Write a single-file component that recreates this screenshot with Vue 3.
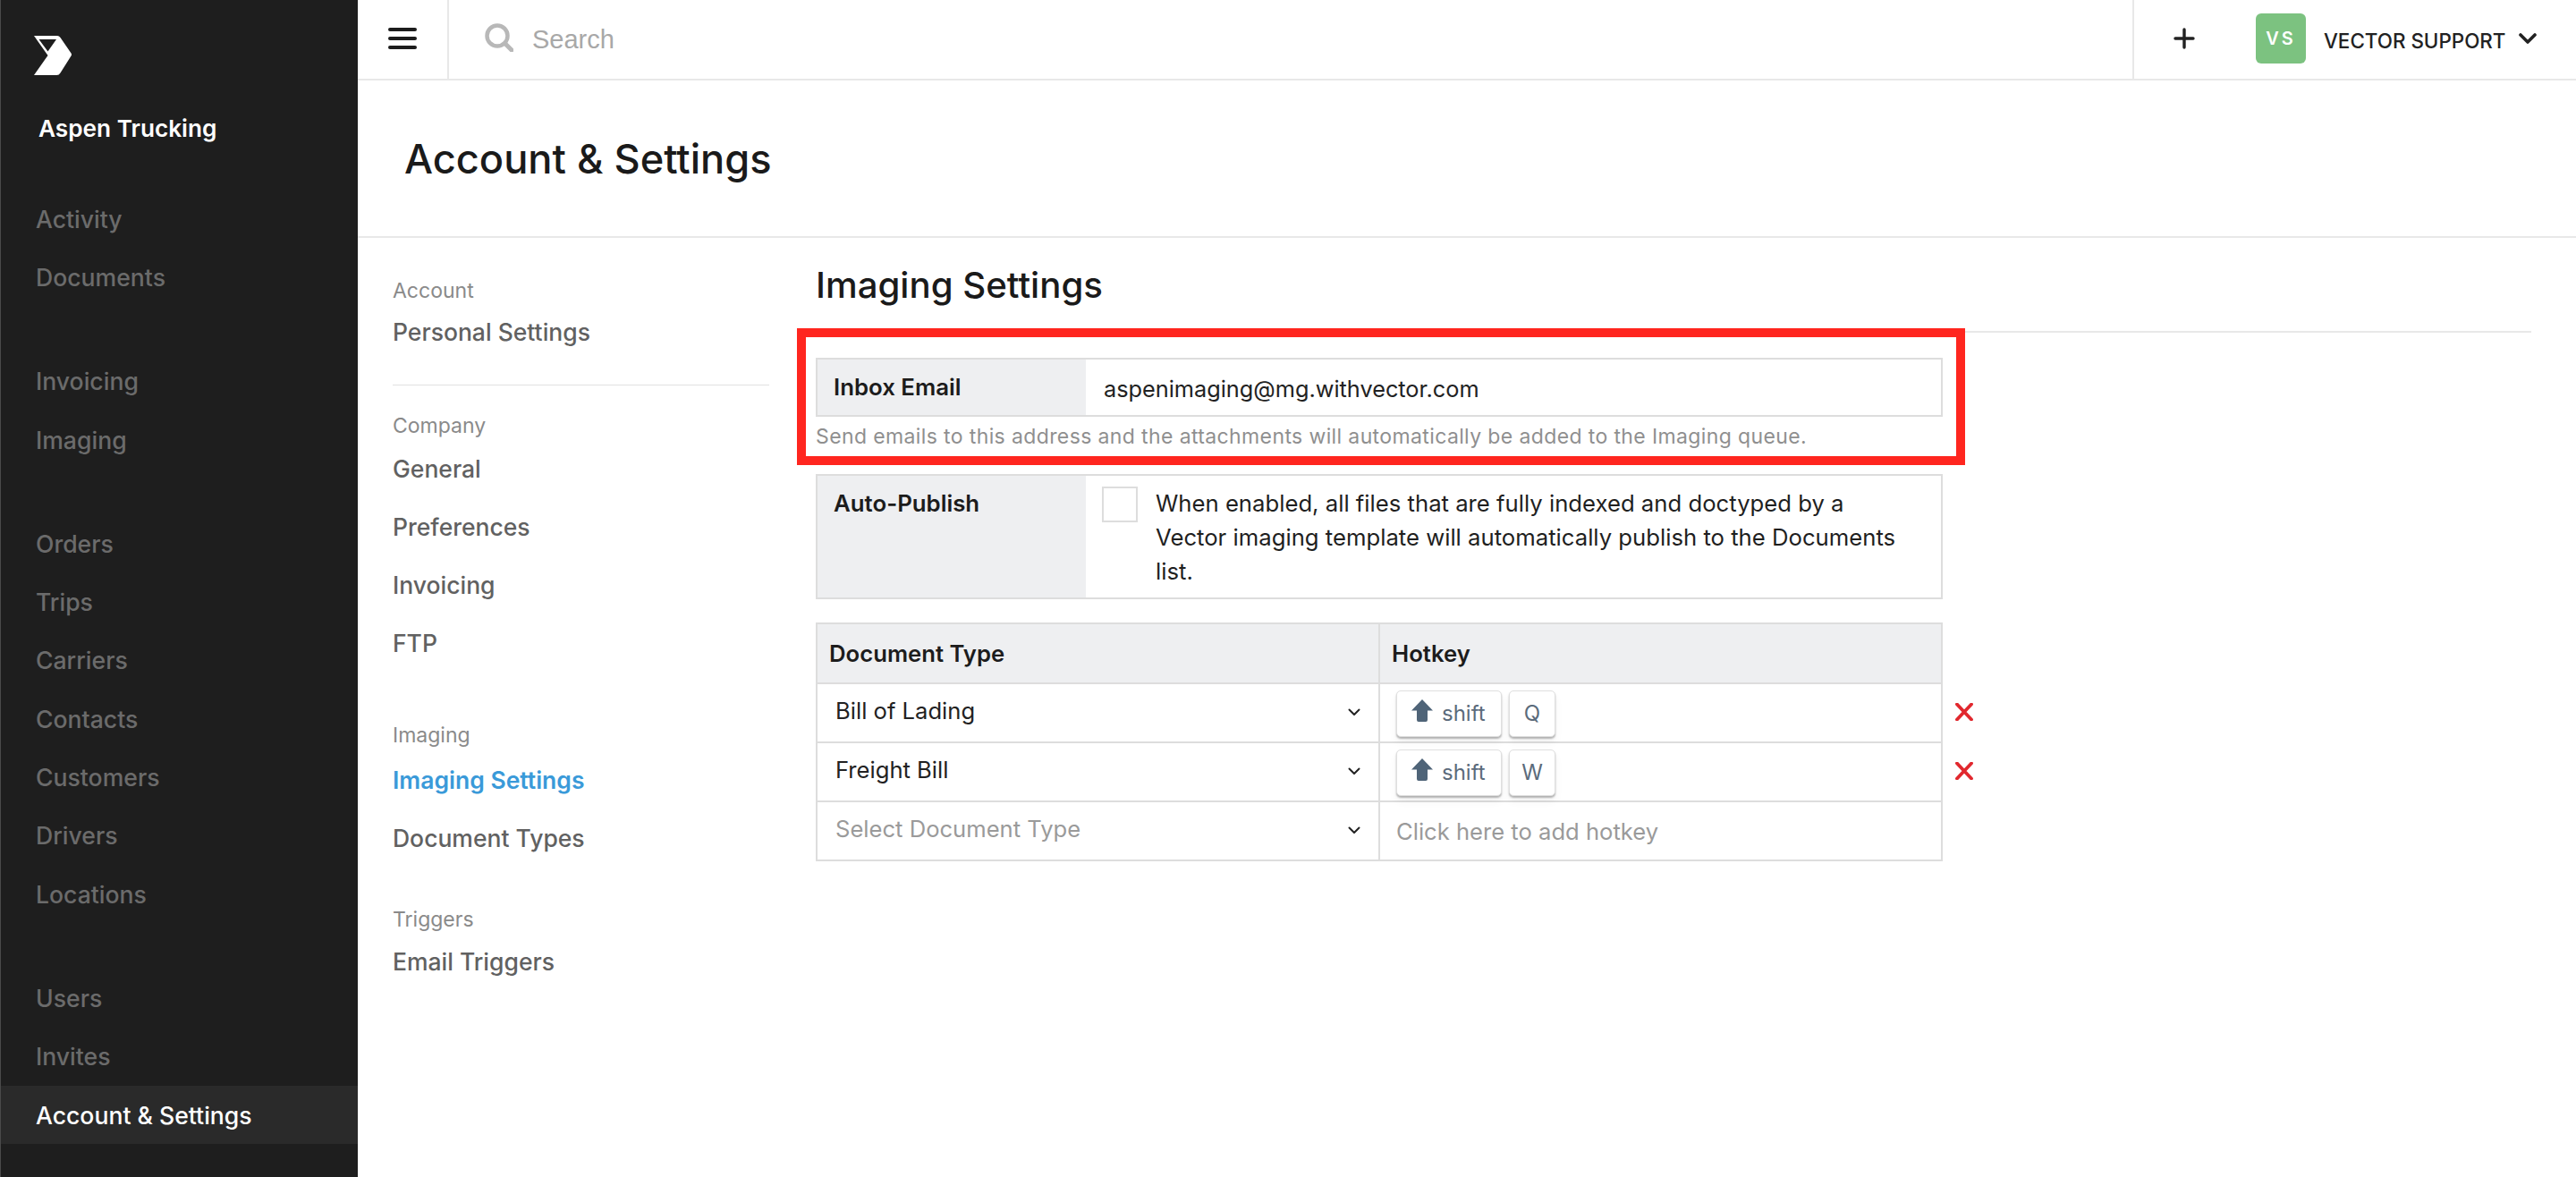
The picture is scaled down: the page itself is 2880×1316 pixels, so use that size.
<script setup>
const mainGroups = [
  ['Activity', 'Documents'],
  ['Invoicing', 'Imaging'],
  ['Orders', 'Trips', 'Carriers', 'Contacts', 'Customers', 'Drivers', 'Locations'],
  ['Users', 'Invites', 'Account & Settings']
]
const subGroups = [
  { label: 'Account', links: ['Personal Settings'], rule: true, cls: 'g-account' },
  { label: 'Company', links: ['General', 'Preferences', 'Invoicing', 'FTP'], cls: 'g-company' },
  { label: 'Imaging', links: ['Imaging Settings', 'Document Types'], cls: 'g-imaging' },
  { label: 'Triggers', links: ['Email Triggers'], cls: 'g-triggers' }
]
const rows = [
  { doc: 'Bill of Lading', key: 'Q' },
  { doc: 'Freight Bill', key: 'W' }
]
</script>

<template>
  <div class="app">
    <aside class="sidebar">
      <svg class="logo" viewBox="0 0 42 44" width="42" height="44">
        <path fill="#fff" fill-rule="evenodd" d="M1 0H26Q28 0 29.500 2L41.500 19.500Q42.500 21 41.500 22.500L29.500 41.500Q28 44 25.500 44H0L15.500 22L0 0ZM5.500 4L15.500 17.500L25 4Z"/>
      </svg>
      <div class="company">Aspen Trucking</div>
      <nav class="main-nav">
        <div v-for="(group, i) in mainGroups" :key="i" class="nav-group">
          <a v-for="item in group" :key="item" class="nav-item" :class="{ active: item === 'Account & Settings' }">{{ item }}</a>
        </div>
      </nav>
    </aside>

    <div class="main">
      <header class="topbar">
        <button class="menu-btn" aria-label="Menu">
          <span></span><span></span><span></span>
        </button>
        <div class="search">
          <svg viewBox="0 0 32 32" width="32" height="32" fill="none" stroke="#b8b8b8">
            <circle cx="14" cy="14" r="11.500" stroke-width="4.500"/>
            <path d="M22.500 22.500L30 30" stroke-width="5" stroke-linecap="round"/>
          </svg>
          <span>Search</span>
        </div>
        <div class="top-right">
          <svg class="plus" viewBox="0 0 24 24" width="24" height="24" stroke="#222" stroke-width="3.400" stroke-linecap="round">
            <path d="M12 2V22M2 12H22"/>
          </svg>
          <div class="avatar">VS</div>
          <span class="user">VECTOR SUPPORT</span>
          <svg class="user-caret" viewBox="0 0 20 12" width="20" height="12" fill="none" stroke="#222" stroke-width="3.600" stroke-linecap="round" stroke-linejoin="round">
            <path d="M2 2L10 10L18 2"/>
          </svg>
        </div>
      </header>

      <div class="page-head"><h1>Account &amp; Settings</h1></div>

      <div class="page-body">
        <nav class="sub-nav">
          <section v-for="g in subGroups" :key="g.label" class="sub-group" :class="g.cls">
            <div class="sub-label">{{ g.label }}</div>
            <a v-for="l in g.links" :key="l" class="sub-link" :class="{ current: l === 'Imaging Settings' }">{{ l }}</a>
          </section>
        </nav>

        <section class="content">
          <h2>Imaging Settings</h2>
          <div class="form">
            <div class="highlight"></div>
            <div class="field field-email">
              <div class="field-label">Inbox Email</div>
              <div class="field-value email">aspenimaging@mg.withvector.com</div>
            </div>
            <p class="help">Send emails to this address and the attachments will automatically be added to the Imaging queue.</p>
            <div class="field field-auto">
              <div class="field-label">Auto-Publish</div>
              <div class="field-value auto">
                <span class="checkbox"></span>
                <span class="auto-text">When enabled, all files that are fully indexed and doctyped by a Vector imaging template will automatically publish to the Documents list.</span>
              </div>
            </div>

            <div class="table">
              <div class="tr head">
                <div class="td th-doc">Document Type</div>
                <div class="td th-key">Hotkey</div>
              </div>
              <div v-for="r in rows" :key="r.key" class="tr">
                <div class="td doc">
                  <span>{{ r.doc }}</span>
                  <svg class="caret" viewBox="0 0 14 9" width="14" height="9" fill="none" stroke="#222" stroke-width="2" stroke-linecap="round" stroke-linejoin="round"><path d="M1.500 1.500L7 7L12.500 1.500"/></svg>
                </div>
                <div class="td keys">
                  <span class="key key-shift">
                    <svg viewBox="0 0 24 25" width="24" height="25"><path fill="#4f6478" d="M12 0L24 12.500H18V23Q18 25 16 25H8Q6 25 6 23V12.500H0Z"/></svg>
                    <span>shift</span>
                  </span>
                  <span class="key key-char">{{ r.key }}</span>
                  <svg class="remove" viewBox="0 0 20 20" width="20" height="20" stroke="#e1282e" stroke-width="3.800" stroke-linecap="round"><path d="M2 1.500L18 18.500M18 1.500L2 18.500"/></svg>
                </div>
              </div>
              <div class="tr">
                <div class="td doc placeholder">
                  <span>Select Document Type</span>
                  <svg class="caret" viewBox="0 0 14 9" width="14" height="9" fill="none" stroke="#222" stroke-width="2" stroke-linecap="round" stroke-linejoin="round"><path d="M1.500 1.500L7 7L12.500 1.500"/></svg>
                </div>
                <div class="td keys placeholder add">Click here to add hotkey</div>
              </div>
            </div>
          </div>
        </section>
      </div>
    </div>
  </div>
</template>

<style>
html, body { margin: 0; background: #fff; }
</style>

<style scoped>
* { box-sizing: border-box; }
.app {
  display: flex;
  width: 2880px;
  height: 1316px;
  overflow: hidden;
  font-family: Inter, "Liberation Sans", sans-serif;
  color: #1c1c1c;
  background: #fff;
}
.sidebar {
  width: 400px;
  flex: none;
  background: #1e1e1e;
  border-left: 1px solid #4a4a4a;
  padding-top: 40px;
  display: flex;
  flex-direction: column;
}
.logo { margin-left: 37px; display: block; }
.company {
  margin: 44px 0 0 42px;
  color: #fff;
  font-size: 26.200px;
  line-height: 32px;
  font-weight: 600;
}
.main-nav { margin-top: 52px; display: flex; flex-direction: column; gap: 51px; }
.nav-group { display: flex; flex-direction: column; }
.nav-item {
  height: 65.300px;
  display: flex;
  align-items: center;
  padding-left: 39px;
  color: #6b6b6b;
  font-size: 26.600px;
  font-weight: 500;
}
.nav-item.active { background: #2a2a2a; color: #fff; }

.main { flex: 1; min-width: 0; display: flex; flex-direction: column; }
.topbar {
  height: 90px;
  flex: none;
  display: flex;
  align-items: stretch;
  border-bottom: 2px solid #e8e8e8;
}
.menu-btn {
  width: 102px;
  border: 0;
  border-right: 2px solid #e8e8e8;
  background: #fff;
  padding: 0 0 2px;
  display: flex;
  flex-direction: column;
  gap: 6px;
  align-items: center;
  justify-content: center;
}
.menu-btn span { display: block; width: 32px; height: 4px; border-radius: 2px; background: #1c1c1c; }
.search {
  flex: 1;
  display: flex;
  align-items: center;
  padding-left: 40px;
  gap: 21px;
  font-family: "Liberation Sans", Arial, sans-serif;
  font-size: 29px;
  color: #a8a8a8;
}
.search svg { margin-top: -4px; }
.top-right {
  width: 496px;
  border-left: 2px solid #e8e8e8;
  display: flex;
  align-items: center;
  padding-left: 44px;
}
.plus { margin-top: -2px; }
.avatar {
  width: 56px;
  height: 56px;
  margin: -2px 0 0 68px;
  border-radius: 6px;
  background: #7cc280;
  color: #fff;
  font-size: 20px;
  font-weight: 600;
  letter-spacing: 3px;
  display: flex;
  align-items: center;
  justify-content: center;
}
.user {
  margin: 2px 0 0 20px;
  font-size: 22.400px;
  font-weight: 500;
  color: #222;
}
.user-caret { margin: -2px 0 0 15px; }

.page-head {
  height: 176px;
  flex: none;
  border-bottom: 2px solid #e8e8e8;
  padding-left: 52px;
  display: flex;
  align-items: center;
}
.page-head h1 { margin: 0; font-size: 45.200px; font-weight: 500; color: #1a1a1a; }

.page-body { flex: 1; display: flex; min-height: 0; }
.sub-nav { width: 460px; flex: none; padding: 42px 0 0 39px; }
.sub-group { width: 421px; }
.sub-label { font-size: 23px; line-height: 34px; color: #8a8a8a; }
.sub-link {
  display: flex;
  align-items: center;
  height: 65px;
  font-size: 26.500px;
  font-weight: 500;
  color: #616161;
}
.sub-link.current { color: #3a9ad9; font-weight: 600; }
.g-account { border-bottom: 1px solid #e2e2e2; height: 123px; margin-bottom: 28px; }
.g-account .sub-label + .sub-link { margin-top: -4px; }
.g-company { margin-bottom: 54px; }
.g-company .sub-label + .sub-link { margin-top: -2px; }
.g-imaging { margin-bottom: 42px; }
.g-triggers .sub-label + .sub-link { margin-top: -3px; }

.content { width: 1918px; flex: none; padding-top: 28px; margin-left: 52px; }
.content h2 {
  margin: 0;
  height: 78px;
  line-height: 50px;
  font-size: 40.200px;
  font-weight: 500;
  color: #1a1a1a;
  border-bottom: 2px solid #e8e8e8;
}
.form { position: relative; width: 1260px; padding-top: 28px; }
.highlight {
  position: absolute;
  left: -21px;
  top: -5px;
  width: 1306px;
  height: 153px;
  border: 10px solid #ff261f;
  pointer-events: none;
}
.field { display: flex; border: 2px solid #dddddd; }
.field-label {
  width: 300px;
  flex: none;
  background: #eeeff1;
  padding-left: 18px;
  font-size: 25.800px;
  font-weight: 600;
  color: #1c1c1c;
}
.field-email { height: 66px; }
.field-email .field-label { line-height: 62px; }
.field-value { flex: 1; background: #fff; }
.email { padding-left: 20px; font-size: 25.300px; line-height: 66px; color: #222; }
.help {
  margin: 10px 0 0;
  height: 54px;
  font-size: 23px;
  letter-spacing: 0.380px;
  line-height: 24px;
  color: #8f8f8f;
}
.field-auto { height: 140px; }
.field-auto .field-label { line-height: 34px; padding-top: 14px; }
.auto { display: flex; padding: 12px 30px 0 18px; font-size: 25.700px; line-height: 38px; color: #1f1f1f; }
.checkbox { width: 40px; height: 40px; flex: none; border: 2px solid #dddddd; margin-right: 20px; }
.table { margin-top: 26px; border: 2px solid #dddddd; border-bottom-width: 2px; }
.tr { display: grid; grid-template-columns: 627px 1fr; height: 66px; border-bottom: 2px solid #dddddd; }
.tr:last-child { border-bottom: 0; height: 64px; }
.tr.head { height: 67px; background: #eeeff1; }
.td { display: flex; align-items: center; min-width: 0; position: relative; }
.td + .td { border-left: 2px solid #dddddd; }
.th-doc, .th-key { font-size: 25.700px; font-weight: 600; color: #1c1c1c; padding-left: 13px; }
.doc { justify-content: space-between; padding: 0 20px 0 20px; font-size: 25.600px; color: #222; }
.doc span { margin-top: -6px; }
.caret { margin-top: -2px; }
.keys { padding-left: 18px; gap: 8px; }
.placeholder { color: #9a9a9a; }
.add { font-size: 25.600px; padding-left: 18px; }
.key {
  height: 52px;
  margin-top: 1px;
  display: inline-flex;
  align-items: center;
  background: #fff;
  border-radius: 5px;
  border: 1px solid #dfdfdf;
  box-shadow: 0 2px 2px rgba(0, 0, 0, 0.28), 0 6px 10px rgba(0, 0, 0, 0.05);
  color: #5b6b7b;
  font-size: 24px;
}
.key-shift { width: 118px; padding-left: 16px; gap: 10px; }
.key-shift svg { margin-top: -6px; }
.key-char { width: 52px; justify-content: center; }
.remove { position: absolute; left: 643px; top: 21px; }
</style>
